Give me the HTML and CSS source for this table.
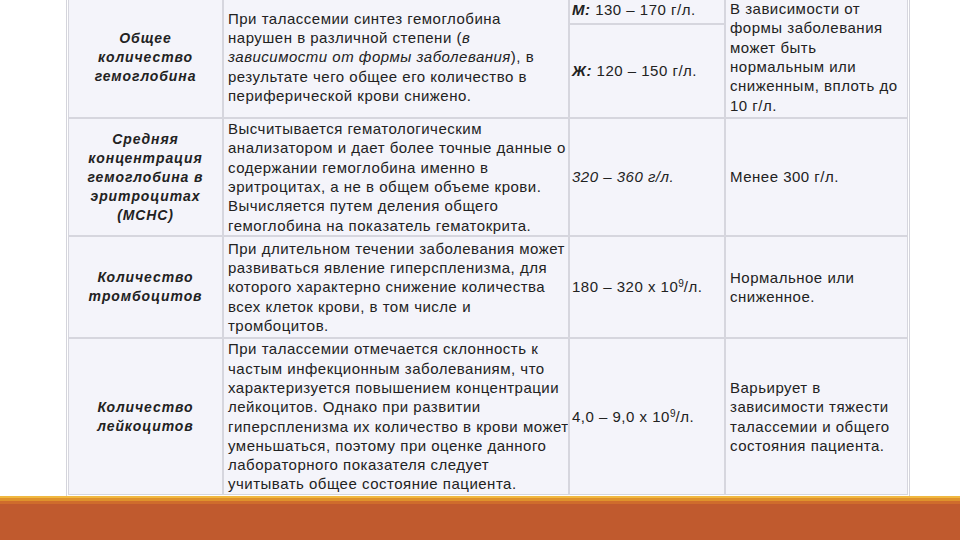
FILE: index.html
```html
<!DOCTYPE html>
<html lang="ru">
<head>
<meta charset="utf-8">
<link rel="stylesheet" href="styles.css">
</head>
<body>
<div class="slide">
  <div class="table-wrap">
    <table class="lab">
      <colgroup>
        <col class="c1"><col class="c2"><col class="c3"><col class="c4">
      </colgroup>
      <tr class="r1a">
        <td class="name" rowspan="2">Общее<br>количество<br>гемоглобина</td>
        <td class="desc" rowspan="2">При талассемии синтез гемоглобина<br>нарушен в различной степени (<i>в<br>зависимости от формы заболевания</i>), в<br>результате чего общее его количество в<br>периферической крови снижено.</td>
        <td class="norm top"><b><i>М:</i></b> 130 – 170 г/л.</td>
        <td class="path" rowspan="2">В зависимости от<br>формы заболевания<br>может быть<br>нормальным или<br>сниженным, вплоть до<br>10 г/л.</td>
      </tr>
      <tr class="r1b">
        <td class="norm"><b><i>Ж:</i></b> 120 – 150 г/л.</td>
      </tr>
      <tr class="r2">
        <td class="name">Средняя<br>концентрация<br>гемоглобина в<br>эритроцитах<br>(МСНС)</td>
        <td class="desc">Высчитывается гематологическим<br>анализатором и дает более точные данные о<br>содержании гемоглобина именно в<br>эритроцитах, а не в общем объеме крови.<br>Вычисляется путем деления общего<br>гемоглобина на показатель гематокрита.</td>
        <td class="norm"><i>320 – 360 г/л.</i></td>
        <td class="path">Менее 300 г/л.</td>
      </tr>
      <tr class="r3">
        <td class="name">Количество<br>тромбоцитов</td>
        <td class="desc">При длительном течении заболевания может<br>развиваться явление гиперспленизма, для<br>которого характерно снижение количества<br>всех клеток крови, в том числе и<br>тромбоцитов.</td>
        <td class="norm">180 – 320 х 10<sup>9</sup>/л.</td>
        <td class="path">Нормальное или<br>сниженное.</td>
      </tr>
      <tr class="r4">
        <td class="name">Количество<br>лейкоцитов</td>
        <td class="desc">При талассемии отмечается склонность к<br>частым инфекционным заболеваниям, что<br>характеризуется повышением концентрации<br>лейкоцитов. Однако при развитии<br>гиперспленизма их количество в крови может<br>уменьшаться, поэтому при оценке данного<br>лабораторного показателя следует<br>учитывать общее состояние пациента.</td>
        <td class="norm">4,0 – 9,0 х 10<sup>9</sup>/л.</td>
        <td class="path">Варьирует в<br>зависимости тяжести<br>талассемии и общего<br>состояния пациента.</td>
      </tr>
    </table>
  </div>
  <div class="footer-bar">
    <div class="stripe s1"></div>
    <div class="stripe s2"></div>
    <div class="stripe s3"></div>
    <div class="band"></div>
  </div>
</div>
</body>
</html>
```
FILE: styles.css
```css
html, body {
  margin: 0;
  padding: 0;
  background: #ffffff;
}
.slide {
  width: 960px;
  height: 540px;
  display: flex;
  flex-direction: column;
  overflow: hidden;
  font-family: "Liberation Sans", Arial, sans-serif;
  color: #222222;
}
.table-wrap {
  height: 496px;
  padding-left: 66px;
  overflow: hidden;
}
.lab {
  margin-top: -6px;
  border-collapse: separate;
  border-spacing: 0;
  table-layout: fixed;
  width: 843px;
  border: 1px solid #d4d4dc;
  padding: 1px;
  background: #ffffff;
}
.c1 { width: 155px; }
.c2 { width: 346px; }
.c3 { width: 156px; }
.c4 { width: 183px; }
.lab td {
  background: #f4f4fa;
  border: 1px solid #d6d6de;
  vertical-align: middle;
  font-size: 15px;
  letter-spacing: 0.5px;
  line-height: 19.3px;
  padding: 0 3px 0 4px;
  overflow: hidden;
  white-space: nowrap;
}
.lab td.name {
  text-align: center;
  font-weight: bold;
  font-style: italic;
  font-size: 14px;
  letter-spacing: 0.9px;
  line-height: 19px;
  padding: 0;
}
.lab td.path { padding-left: 4px; }
.lab td.norm { padding-left: 2px; }
.r1a { height: 28px; }
.r1b { height: 94px; }
.r2 { height: 118px; }
.r3 { height: 102px; }
.r4 { height: 157px; }
sup {
  font-size: 10px;
  line-height: 0;
  letter-spacing: 0;
  vertical-align: 5px;
}
.footer-bar {
  display: flex;
  flex-direction: column;
  flex: 1;
}
.stripe.s1 { height: 2px; background: #f0b840; }
.stripe.s2 { height: 3px; background: #df922c; }
.stripe.s3 { height: 3px; background: #cf6c2c; }
.band { flex: 1; background: #c05a2e; }
```
